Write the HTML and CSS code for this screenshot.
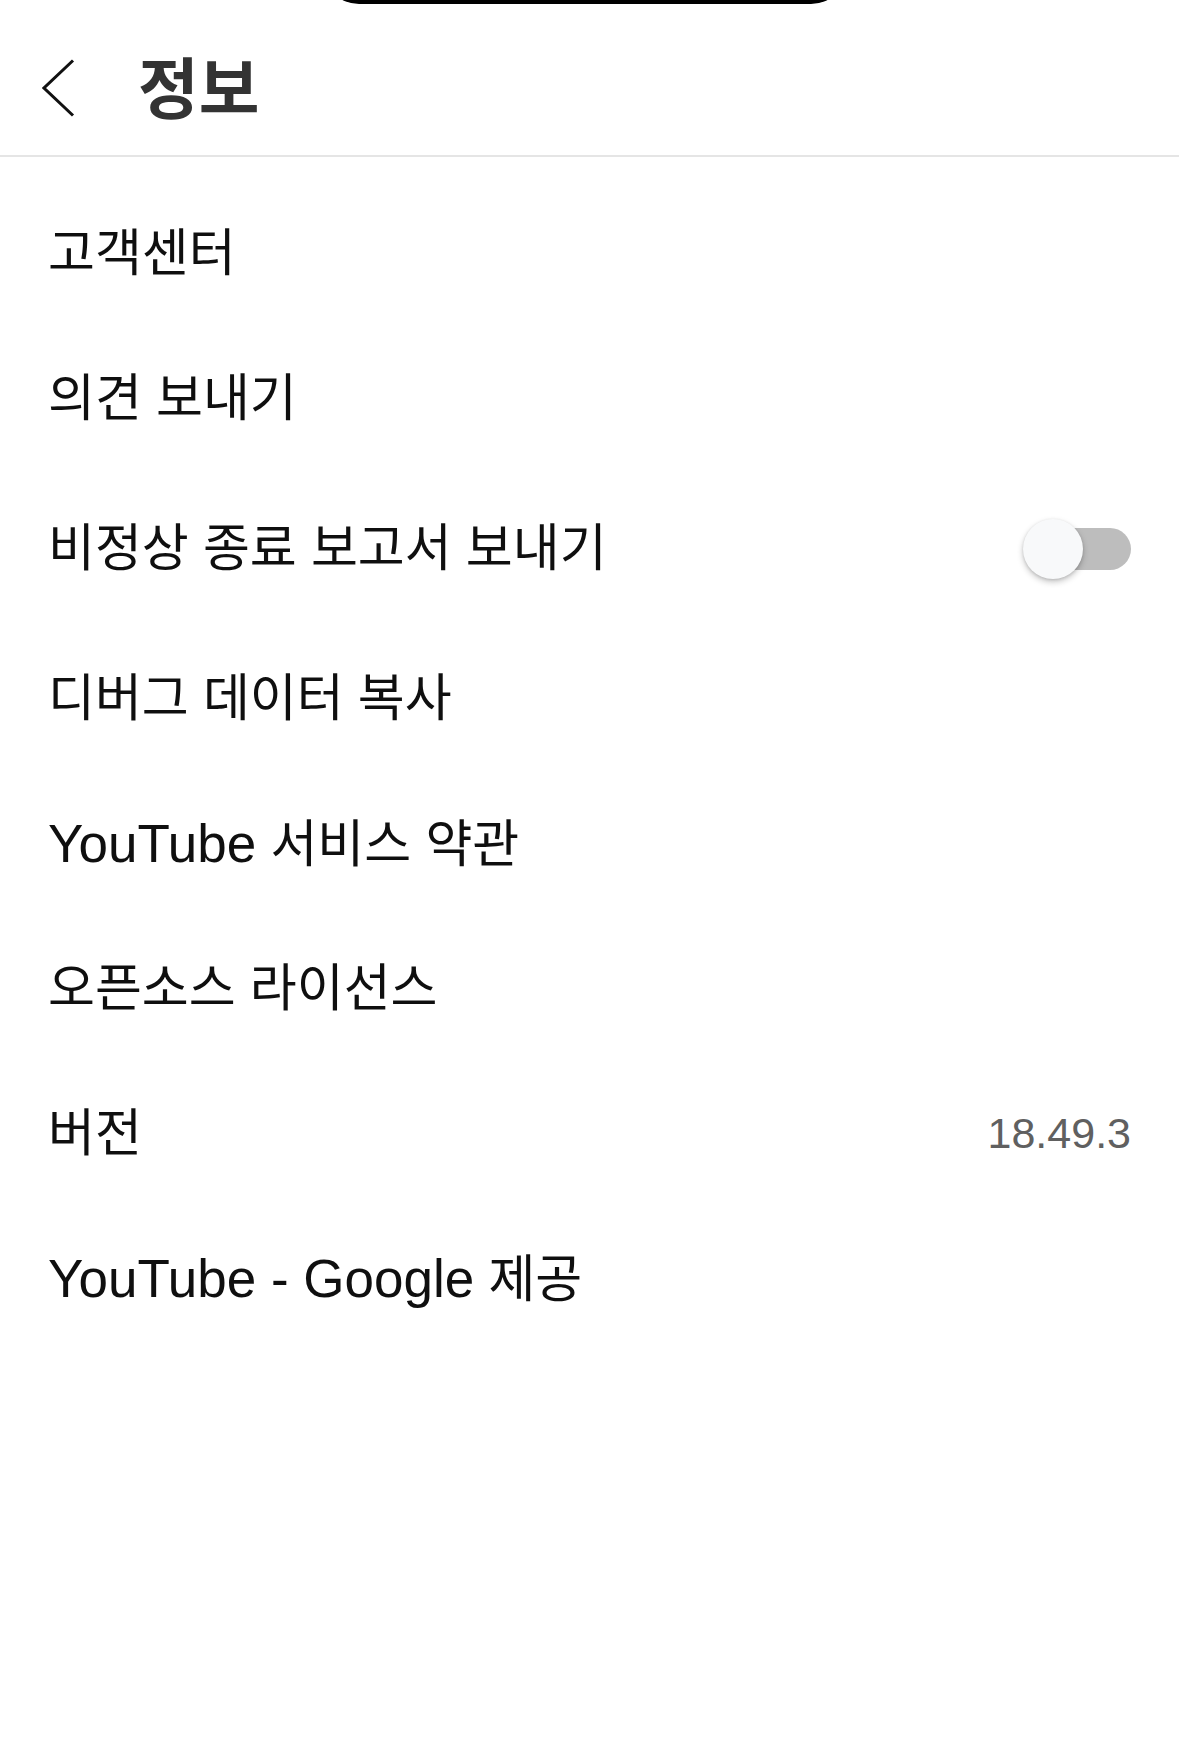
FILE: index.html
```html
<!DOCTYPE html>
<html lang="ko">
<head>
<meta charset="utf-8">
<title>정보</title>
<link rel="stylesheet" href="styles.css">
</head>
<body>
<div class="island"></div>
<header class="topbar">
  <button class="back" aria-label="뒤로">
    <svg width="33" height="58" viewBox="0 0 33 58"><polyline points="31,1.5 2,29 31,56.5" fill="none" stroke="#111" stroke-width="3" stroke-linejoin="miter"/></svg>
  </button>
  <h1 class="title">정보</h1>
</header>
<ul class="list">
  <li class="row">고객센터</li>
  <li class="row">의견 보내기</li>
  <li class="row row-tall">비정상 종료 보고서 보내기
    <span class="switch"><span class="track"></span><span class="knob"></span></span>
  </li>
  <li class="row">디버그 데이터 복사</li>
  <li class="row"><span><span class="latin">YouTube</span> 서비스 약관</span></li>
  <li class="row">오픈소스 라이선스</li>
  <li class="row">버전<span class="value">18.49.3</span></li>
  <li class="row"><span><span class="latin">YouTube - Google</span> 제공</span></li>
</ul>
</body>
</html>
```
FILE: styles.css
```css
html, body {
  margin: 0;
  padding: 0;
  background: #ffffff;
}
body {
  width: 1179px;
  min-height: 1747px;
  position: relative;
  font-family: "Liberation Sans", "Noto Sans CJK KR", sans-serif;
  color: #0f0f0f;
  overflow: hidden;
}
.island {
  position: absolute;
  left: 323px;
  top: -40px;
  width: 524px;
  height: 44px;
  border-radius: 0 0 36px 36px;
  background: #000;
}
.topbar {
  height: 157px;
  box-sizing: border-box;
  padding: 20px 0 0 42px;
  display: flex;
  align-items: center;
  border-bottom: 2px solid #e5e5e5;
}
.back {
  border: 0;
  background: none;
  padding: 0;
  display: flex;
  width: 33px;
  height: 58px;
}
.title {
  margin: -8px 0 0 63px;
  font-family: "Noto Sans CJK KR", sans-serif;
  font-weight: 700;
  font-size: 66px;
  line-height: 1;
  color: #333333;
  letter-spacing: 0;
}
.list {
  list-style: none;
  margin: 0;
  padding: 24px 0 0 0;
}
.row {
  height: 145px;
  box-sizing: border-box;
  padding: 0 48px 0 48px;
  display: flex;
  align-items: center;
  justify-content: space-between;
  font-size: 51px;
  line-height: 1;
}
.latin {
  font-size: 53px;
}
.row-tall {
  height: 155px;
  padding-top: 0;
}
.value {
  font-size: 43px;
  color: #606060;
}
.switch {
  position: relative;
  width: 108px;
  height: 62px;
  flex: none;
}
.track {
  position: absolute;
  right: 0;
  top: 10px;
  width: 92px;
  height: 42px;
  border-radius: 21px;
  background: #bdbdbd;
}
.knob {
  position: absolute;
  left: 0;
  top: 1px;
  width: 60px;
  height: 60px;
  border-radius: 50%;
  background: #f8f9fa;
  box-shadow: 0 3px 6px rgba(0,0,0,0.22), 0 1px 3px rgba(0,0,0,0.12);
}
```
